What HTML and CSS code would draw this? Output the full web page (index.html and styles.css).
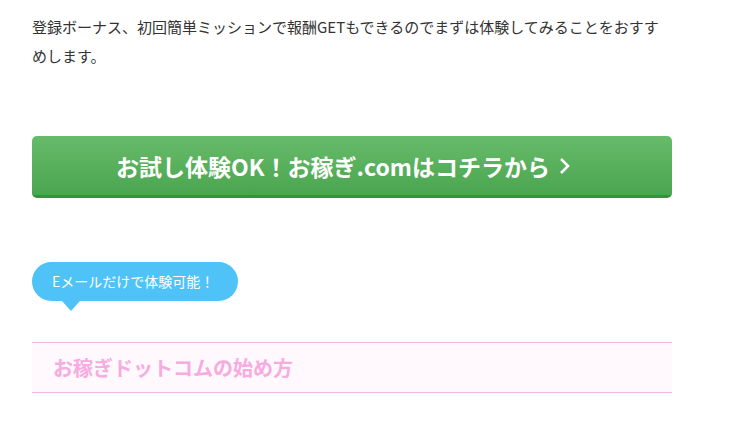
FILE: index.html
```html
<!DOCTYPE html>
<html lang="ja">
<head>
    <meta charset="UTF-8">
    <meta name="viewport" content="width=device-width, initial-scale=1.0">
    <title>お稼ぎドットコム</title>
    <link rel="stylesheet" href="styles.css">
</head>
<body>
    <div class="entry">
        <p class="lead">登録ボーナス、初回簡単ミッションで報酬GETもできるのでまずは体験してみることをおすすめします。</p>

        <a href="#" class="cta-button">
            <span>お試し体験OK！お稼ぎ.comはコチラから</span>
            <svg class="chevron" width="12" height="18" viewBox="0 0 12 18">
                <polyline points="3,2 10,9 3,16" fill="none" stroke="#fff" stroke-width="2.6"/>
            </svg>
        </a>

        <div class="balloon">Eメールだけで体験可能！</div>

        <h2 class="section-title">お稼ぎドットコムの始め方</h2>
    </div>
</body>
</html>
```

FILE: styles.css
```css
body {
    font-family: "Noto Sans CJK JP", "Noto Sans", sans-serif;
    margin: 0;
    padding: 0;
    background-color: #fff;
    color: #333;
}
.entry {
    width: 640px;
    padding: 12px 0 0 32px;
}
.lead {
    font-size: 15px;
    line-height: 29px;
    margin: 0;
}
.cta-button {
    display: flex;
    align-items: center;
    justify-content: center;
    gap: 8px;
    margin-top: 66px;
    padding-right: 18px;
    height: 59px;
    background: linear-gradient(#67bb6a, #4ba54f);
    border-bottom: 3px solid #38913c;
    border-radius: 5px;
    color: white;
    text-decoration: none;
    font-size: 23px;
    font-weight: bold;
}
.chevron {
    display: block;
}
.balloon {
    position: relative;
    display: inline-block;
    margin-top: 64px;
    padding: 0 24px 0 20px;
    height: 39px;
    line-height: 39px;
    background-color: #4fc3f7;
    border-radius: 20px;
    color: white;
    font-size: 14px;
}
.balloon::after {
    content: "";
    position: absolute;
    left: 30px;
    bottom: -10px;
    border-left: 9px solid transparent;
    border-right: 9px solid transparent;
    border-top: 10px solid #4fc3f7;
}
.section-title {
    margin: 41px 0 0 0;
    padding: 0 21px;
    height: 49px;
    line-height: 49px;
    background-color: #fff8fc;
    border-top: 1px solid #efb5e6;
    border-bottom: 1px solid #efb5e6;
    color: #f6ace0;
    font-size: 20px;
    font-weight: bold;
}
```
